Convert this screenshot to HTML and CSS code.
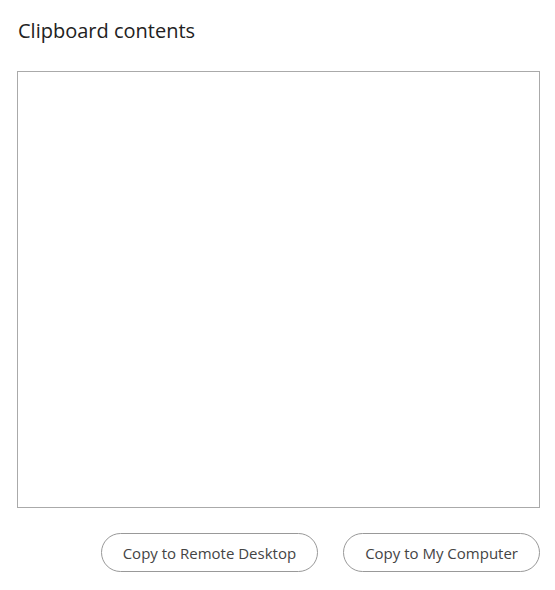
FILE: index.html
```html
<!DOCTYPE html>
<html>
<head>
<meta charset="utf-8">
<link rel="stylesheet" href="styles.css">
</head>
<body>
<div class="panel">
  <h2 class="title">Clipboard contents</h2>
  <textarea class="contents"></textarea>
  <div class="actions">
    <button class="btn">Copy to Remote Desktop</button>
    <button class="btn">Copy to My Computer</button>
  </div>
</div>
</body>
</html>
```
FILE: styles.css
```css
html, body {
  margin: 0;
  padding: 0;
  background: #fff;
}
.panel {
  padding: 17px 15px 0 17px;
  font-family: "Open Sans", "Noto Sans", sans-serif;
  display: flex;
  flex-direction: column;
}
.title {
  margin: 0;
  font-size: 20px;
  font-weight: 400;
  color: #222;
  line-height: 28px;
  padding-left: 1px;
}
.contents {
  margin-top: 26px;
  box-sizing: border-box;
  width: 523px;
  height: 437px;
  border: 1px solid #aaa;
  border-radius: 0;
  resize: none;
  padding: 4px;
  outline: none;
}
.actions {
  display: flex;
  justify-content: flex-end;
  gap: 25px;
  margin-top: 25px;
}
.btn {
  box-sizing: border-box;
  height: 39px;
  padding: 0 21px;
  border: 1px solid #999;
  border-radius: 20px;
  background: #fff;
  font-family: "Open Sans", "Noto Sans", sans-serif;
  font-size: 15px;
  color: #444;
}
```
